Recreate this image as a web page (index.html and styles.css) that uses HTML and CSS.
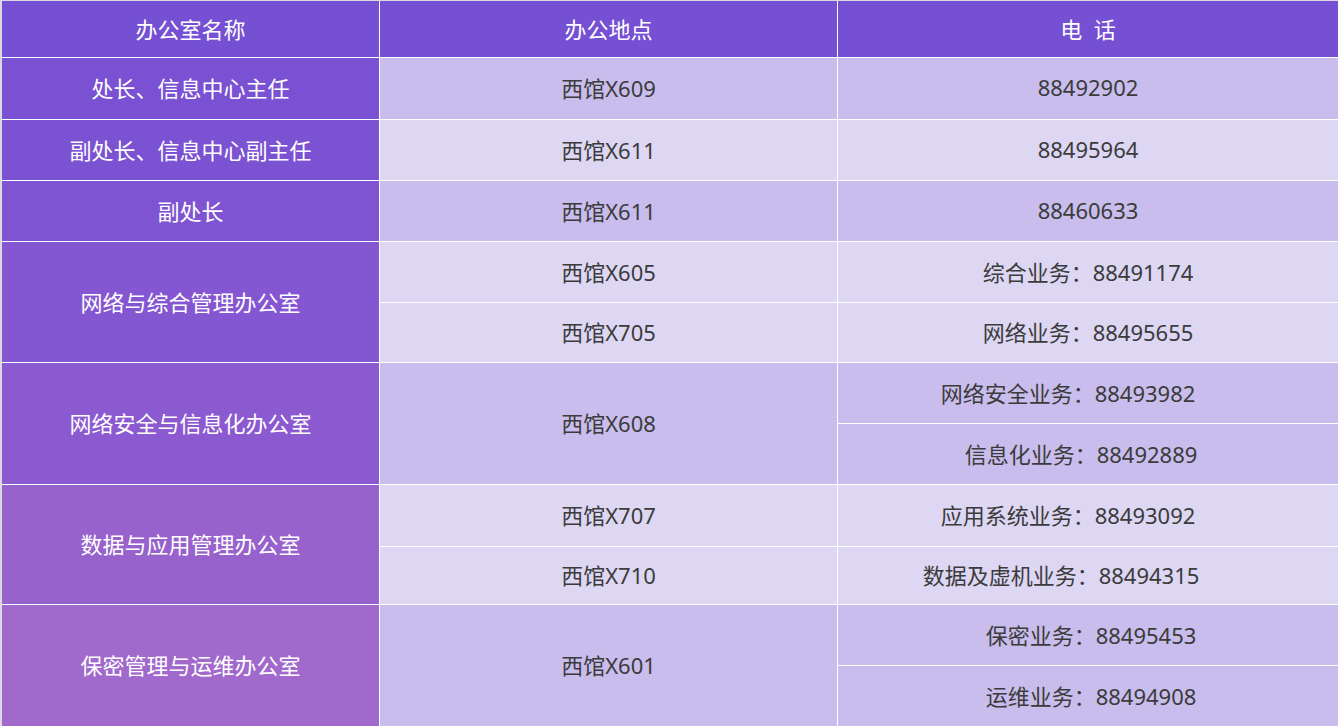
FILE: index.html
```html
<!DOCTYPE html>
<html lang="zh-CN">
<head>
    <meta charset="UTF-8">
    <meta name="viewport" content="width=device-width, initial-scale=1.0">
    <title>办公室电话</title>
    <link rel="stylesheet" href="styles.css">
</head>
<body>
    <div class="phone-table">
        <!-- Header -->
        <div class="cell head">办公室名称</div>
        <div class="cell head">办公地点</div>
        <div class="cell head">电&nbsp;&nbsp;话</div>

        <div class="cell name n1">处长、信息中心主任</div>
        <div class="cell dark">西馆X609</div>
        <div class="cell dark">88492902</div>

        <div class="cell name n2">副处长、信息中心副主任</div>
        <div class="cell light">西馆X611</div>
        <div class="cell light">88495964</div>

        <div class="cell name n3">副处长</div>
        <div class="cell dark">西馆X611</div>
        <div class="cell dark">88460633</div>

        <div class="cell name n4 span2">网络与综合管理办公室</div>
        <div class="cell light">西馆X605</div>
        <div class="cell light">综合业务：88491174</div>
        <div class="cell light">西馆X705</div>
        <div class="cell light">网络业务：88495655</div>

        <div class="cell name n5 span2">网络安全与信息化办公室</div>
        <div class="cell dark span2">西馆X608</div>
        <div class="cell dark shift-m">网络安全业务：88493982</div>
        <div class="cell dark shift-s">信息化业务：88492889</div>

        <div class="cell name n6 span2">数据与应用管理办公室</div>
        <div class="cell light">西馆X707</div>
        <div class="cell light shift-m">应用系统业务：88493092</div>
        <div class="cell light">西馆X710</div>
        <div class="cell light shift-l">数据及虚机业务：88494315</div>

        <div class="cell name n7 span2">保密管理与运维办公室</div>
        <div class="cell dark span2">西馆X601</div>
        <div class="cell dark shift-r">保密业务：88495453</div>
        <div class="cell dark shift-r">运维业务：88494908</div>
    </div>
</body>
</html>
```

FILE: styles.css
```css
body {
    margin: 0;
    font-family: "Noto Sans", "Noto Sans CJK SC", sans-serif;
    font-size: 22px;
    color: #3b3b3b;
    background: #fff;
    overflow: hidden;
}

.phone-table {
    display: grid;
    grid-template-columns: 377px 457px 1fr;
    grid-template-rows: 56px 61px 60px 60px 60px 59px 60px 60px 61px 57px 60px 60px;
    gap: 1px; /* white lines between cells */
    background: #fff;
    border-left: 2px solid #dcd9e4;
    border-top: 1px solid #dcd9e4;
}

.cell {
    display: flex;
    align-items: center;
    justify-content: center;
    padding-bottom: 3px;
    white-space: nowrap;
}

.span2 {
    grid-row: span 2;
}

.head {
    background: #7650d2;
    color: #fff;
    padding-bottom: 2px;
}

.name {
    color: #fff;
}

/* first column gets lighter towards the bottom */
.n1 { background: #7951d2; }
.n2 { background: #7b52d2; }
.n3 { background: #7f54d2; }
.n4 { background: #8556d2; }
.n5 { background: #8c5ad0; }
.n6 { background: #9762cc; }
.n7 { background: #a169cc; }

.dark {
    background: #c8bdec;
}

.light {
    background: #ddd7f4;
}

/* longer phone labels sit a bit left of centre */
.shift-s { padding-right: 14px; }
.shift-m { padding-right: 40px; }
.shift-l { padding-right: 54px; }
.shift-r { padding-left: 6px; }
```
